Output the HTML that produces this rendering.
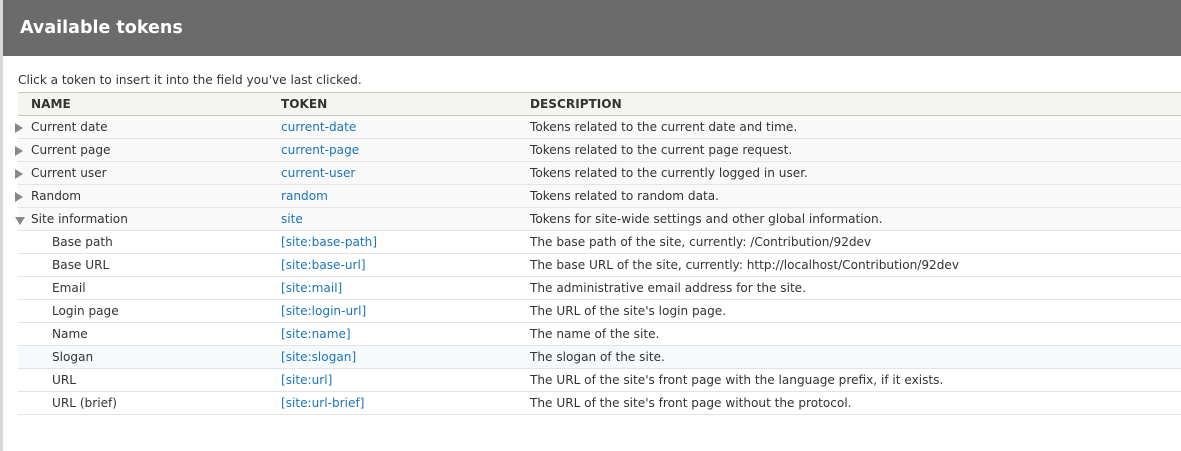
<!DOCTYPE html>
<html><head><style>
body{margin:0;width:1181px;height:451px;overflow:hidden;background:#fff;font-family:"DejaVu Sans","Liberation Sans",sans-serif;font-size:12.1px;color:#333;position:relative}
.bg{position:absolute;left:0;top:0;width:3px;height:451px;background:#d8d8d8}
.dlg{position:absolute;left:3px;top:0;right:0;height:451px;background:#fff}
.hd{height:56px;background:#6b6b6b;color:#fff;font-weight:bold;font-size:17.5px;line-height:56px;padding-left:17px}
.intro{position:absolute;left:15px;top:73px}
table{position:absolute;left:15px;top:92px;width:1163px;border-collapse:collapse;table-layout:fixed}
th{text-align:left;font-weight:bold;height:22px;background:#f4f4f1;border-top:1px solid #c8c8c0;border-bottom:1px solid #c8c8c0;padding:0}
td{height:22px;border-bottom:1px solid #e3e3e3;padding:0;white-space:nowrap}
tr.p td{background:#f9f9f9}
tr.h td{background:#f6fafd}
td.n{padding-left:13px;position:relative}
td.c{padding-left:34px}
a{color:#1a75bb;text-decoration:none}
.ar{position:absolute;left:-3px;top:7px;width:0;height:0;border-top:5px solid transparent;border-bottom:5px solid transparent;border-left:8px solid #888}
.dn{position:absolute;left:-3px;top:9px;width:0;height:0;border-left:5px solid transparent;border-right:5px solid transparent;border-top:8px solid #888}
</style></head><body>
<div class="bg"></div>
<div class="dlg"><div class="hd">Available tokens</div>
<div class="intro">Click a token to insert it into the field you've last clicked.</div>
<table>
<colgroup><col style="width:263px"><col style="width:249px"><col></colgroup>
<tr><th style="padding-left:13px">NAME</th><th>TOKEN</th><th>DESCRIPTION</th></tr>
<tr class="p"><td class="n"><span class="ar"></span>Current date</td><td><a>current-date</a></td><td>Tokens related to the current date and time.</td></tr>
<tr class="p"><td class="n"><span class="ar"></span>Current page</td><td><a>current-page</a></td><td>Tokens related to the current page request.</td></tr>
<tr class="p"><td class="n"><span class="ar"></span>Current user</td><td><a>current-user</a></td><td>Tokens related to the currently logged in user.</td></tr>
<tr class="p"><td class="n"><span class="ar"></span>Random</td><td><a>random</a></td><td>Tokens related to random data.</td></tr>
<tr class="p"><td class="n"><span class="dn"></span>Site information</td><td><a>site</a></td><td>Tokens for site-wide settings and other global information.</td></tr>
<tr><td class="c">Base path</td><td><a>[site:base-path]</a></td><td>The base path of the site, currently: /Contribution/92dev</td></tr>
<tr><td class="c">Base URL</td><td><a>[site:base-url]</a></td><td>The base URL of the site, currently: http://localhost/Contribution/92dev</td></tr>
<tr><td class="c">Email</td><td><a>[site:mail]</a></td><td>The administrative email address for the site.</td></tr>
<tr><td class="c">Login page</td><td><a>[site:login-url]</a></td><td>The URL of the site's login page.</td></tr>
<tr><td class="c">Name</td><td><a>[site:name]</a></td><td>The name of the site.</td></tr>
<tr class="h"><td class="c">Slogan</td><td><a>[site:slogan]</a></td><td>The slogan of the site.</td></tr>
<tr><td class="c">URL</td><td><a>[site:url]</a></td><td>The URL of the site's front page with the language prefix, if it exists.</td></tr>
<tr><td class="c">URL (brief)</td><td><a>[site:url-brief]</a></td><td>The URL of the site's front page without the protocol.</td></tr>
</table></div>
</body></html>
